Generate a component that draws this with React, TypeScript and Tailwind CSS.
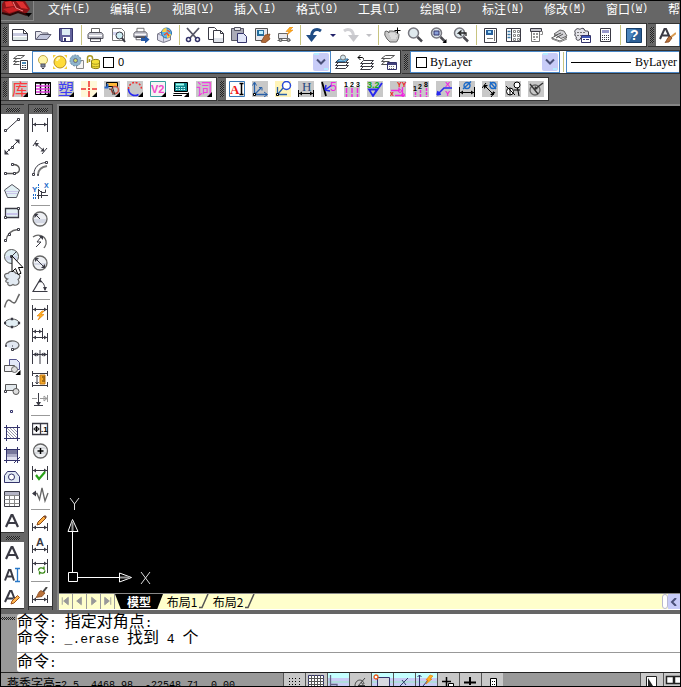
import type { ReactNode } from 'react'

const INK = '#3a3a44'
const NAVY = '#33336b'

const MENUS = [
  ['文件', 'F'],
  ['编辑', 'E'],
  ['视图', 'V'],
  ['插入', 'I'],
  ['格式', 'O'],
  ['工具', 'T'],
  ['绘图', 'D'],
  ['标注', 'N'],
  ['修改', 'M'],
  ['窗口', 'W'],
  ['帮助', 'H'],
]

// '|' is a separator, a trailing '>' marks the narrow drop-down arrows
const STANDARD = [
  'new', 'open', 'save', '|', 'print', 'preview', 'publish', 'dwf', '|',
  'cut', 'copy', 'paste', 'match', 'block', '|', 'undo', 'undo>', 'redo', 'redo>', '|',
  'pan', 'zoom', 'zoomWindow', 'zoomPrev', '|',
  'props', 'center', 'palettes', 'sheets', 'markup', 'calc', '|', 'help',
]

const YANXIU = ['ku', 'table', 'su', 'cross', 'part', 'circleDash', 'v2', 'machine', 'ci']

const YANXIU_DIM = [
  'ai', 'axis', 'axisCircle', 'dimH', 'lead5', 'ord123', 'rough', 'xxyy', 'ord1238', 'xy',
  'diaDim', 'diaAlign', 'diaTwo', 'diaOne',
]

const DRAW = [
  'line', 'xline', 'pline', 'polygon', 'rect', 'arc', 'circle', 'revcloud', 'spline', 'ellipse',
  'ellipseArc', 'insert', 'makeBlock', 'point', 'hatch', 'gradient', 'region', 'grid', 'text',
]

const TEXT_TOOLS = ['text', 'textLine', 'textEdit']

const DIMENSION = [
  'dLinear', 'dAligned', 'dArc', 'dOrdinate', '|', 'dRadius', 'dJogged', 'dDiameter', 'dAngular', '|',
  'dQuick', 'dBaseline', 'dContinue', 'dSpace', 'dBreak', '|', 'dTolerance', 'dCenter', 'dInspect',
  'dJogLine', '|', 'dEdit', 'dTextEdit', 'dUpdate', '|', 'dStyle',
]

const BACK = <path d="M0 0h16v16H0z" fill="#c8c8c8" stroke="none" />
const CORNER = <path d="M16 11v5h-5z" fill="#000" stroke="none" />

const printer = (
  <>
    <path d="M4.500 6V1.500h8V6" fill="#fff" stroke="#666" />
    <path d="M2.500 5.500h12l1.500 2v4h-15v-4z" fill="#c9c9d2" stroke="#55555f" />
    <path d="M2 8.500h13" stroke="#fff" />
    <path d="M3.500 11.500h10v3h-10z" fill="#fff" stroke="#55555f" />
    <path d="M3 11.500h11" strokeWidth="1.500" />
  </>
)

// dimension line at height y between extension lines that run from a to b
const dim = (y: number, a: number, b: number) => (
  <>
    <path d={`M.5 ${a}V${b}M15.500 ${a}V${b}M1 ${y + 0.5}h14`} />
    <path d={`M1 ${y + 0.5}l3-2v4zM15 ${y + 0.5}l-3-2v4z`} fill={INK} stroke="none" />
  </>
)

const bigA = <path d="M2 14 7.500 2h1L14 14M4.500 10h7" strokeWidth="2.200" />

const smallA = (
  <text x="4" y="9" fontSize="11" fontWeight="bold" fill={INK} stroke="none" fontFamily="Liberation Sans, sans-serif">A</text>
)

const bolt = <path d="M10 6 5 11h3l-2 4 6-5.500H9L12 6z" fill="#ffb020" stroke="#e07800" strokeWidth=".6" />

const pencil = (
  <>
    <path d="m6 7 6-6 2 2-6 6-3 1z" fill="#ffae42" stroke="#8a4a18" />
    <path d="m11.500 1.500 1.500-1.500 2 2-1.500 1.500z" fill="#7a4a30" stroke="none" />
  </>
)

const brush = (
  <>
    <path d="m11 5 4-5" stroke="#444" strokeWidth="2" />
    <path d="M9 3.500 13 6l-3 3.500-6 1c2-2 2-6 5-7z" fill="#b8713a" stroke="#7a3c14" strokeWidth=".7" />
  </>
)

const lens = (
  <>
    <circle cx="6.500" cy="6" r="5" fill="#dfe9ee" stroke="#77777f" strokeWidth="1.500" />
    <path d="m10.500 10 4.500 4.500" stroke="#4a4a50" strokeWidth="2.500" />
  </>
)

const layers = (
  <>
    <path d="M4.500 11.500h10l-3 3H1.500z" fill="#fff" />
    <path d="M4.500 8.500h10l-3 3H1.500z" fill="#fff" />
    <path d="M4.500 5.500h10l-3 3H1.500z" fill="#fff" />
  </>
)

const cjk = 'Noto Sans CJK SC, sans-serif'
const sans = 'Liberation Sans, sans-serif'

const ICONS: Record<string, ReactNode> = {
  new: (
    <>
      <path d="M.5 2.500h11l4 4v7H.5z" fill="#fff" />
      <path d="M1 6h14v3H1z" fill="#c9cbe0" stroke="none" />
      <path d="M1 10h14v3H1z" fill="#dde6e6" stroke="none" />
      <path d="M11.500 2.500v4h4" />
    </>
  ),
  open: (
    <>
      <path d="M.5 12.500v-8h5l2 1.500h5.500v2" fill="#e6e6ee" stroke="#5c5c70" />
      <path d="m1 12.500 4-5h11l-4 5z" fill="#c2c6dc" stroke="#5c5c70" />
    </>
  ),
  save: (
    <>
      <path d="M1.500 1.500h13v13H3l-1.500-1.500z" fill="#62629c" stroke={NAVY} />
      <path d="M4 2h8v6H4z" fill="#dcecf4" stroke="none" />
      <path d="M5 10h7v4H5z" fill="#fff" stroke="none" />
      <path d="M6 11h2v3H6z" fill={NAVY} stroke="none" />
    </>
  ),
  print: printer,
  preview: (
    <>
      <path d="M2.500 13.500v-12h9l3 3v9z" fill="#fff" stroke="#777" />
      <path d="M3 5h8v3H3z" fill="#d6d6f0" stroke="none" />
      <circle cx="9.500" cy="8.500" r="3.500" fill="#cfeef4" />
      <path d="m12 11 3 4" strokeWidth="2" />
    </>
  ),
  publish: (
    <>
      <g transform="scale(.88)">{printer}</g>
      <path d="M8 11h4V8.500l4.500 4-4.500 4V14H8z" fill="#2458a8" stroke="none" />
    </>
  ),
  dwf: (
    <>
      <path d="m1.500 7 6-3 7 3v6l-7 2.500-6-2.500z" fill="#dcdcea" stroke="#777788" />
      <path d="M7.500 9v6M1.500 7l6 2" stroke="#9999aa" />
      <circle cx="10.500" cy="6" r="5" fill="#5bb8e8" stroke="#2b6ca8" />
      <path d="M10.500 1v4L6 5c1-3 2-4 4.500-4zM11 7h4c0 2-2 4-4 4z" fill="#ffd23c" stroke="none" />
      <path d="m8 8 3-2 2 3M11 3l3 2" stroke="#e8503a" strokeWidth="1.500" />
    </>
  ),
  cut: (
    <>
      <path d="m2 1 9.500 10.500M14 1 4.500 11.500" strokeWidth="1.800" stroke="#555566" />
      <circle cx="3.500" cy="12.500" r="2" stroke={NAVY} strokeWidth="1.500" />
      <circle cx="12.500" cy="12.500" r="2" stroke={NAVY} strokeWidth="1.500" />
    </>
  ),
  copy: (
    <>
      <path d="M.5.500h6l2 2v10h-8z" fill="#fff" />
      <path d="M5.500 3.500h7l3 3v9h-10z" fill="#fff" />
      <path d="M6 11h9v4H6z" fill="#dfe3ea" stroke="none" />
      <path d="M12.500 3.500v3h3" />
    </>
  ),
  paste: (
    <>
      <path d="M.5 1.500h12v12H.5z" fill="#aaaab6" stroke="#555562" />
      <path d="M3.500.5h6v3h-6z" fill="#e8e8ee" stroke="#555562" />
      <path d="M6.500 6.500h6l3 3v6h-9z" fill="#e2e6f8" stroke={NAVY} />
    </>
  ),
  match: (
    <>
      <path d="M1.500 1.500h12v12h-12z" fill="#e6e6ec" stroke="#555" />
      <path d="M3 3h7v6H3z" fill="#246c9c" stroke="none" />
      <path d="M5 4h4v3H5z" fill="#bff0ff" stroke="none" />
      <path d="m11 8 5-1-1 3 1 2-5 4-4-1z" fill="#b06a38" stroke="#7a3c14" strokeWidth=".7" />
    </>
  ),
  block: (
    <>
      <path d="M1.500 6.500h9v5h-9zM.5 13.500h13" fill="#e8e8ec" stroke="#666" />
      <circle cx="3.500" cy="13" r="1.500" fill="#aaa" stroke="#555" />
      <circle cx="11.500" cy="13" r="1.500" fill="#aaa" stroke="#555" />
      <path d="m13 0-4 4.500h3L10 8l6-5h-3l3-3z" fill="#ffb020" stroke="#e07800" strokeWidth=".5" />
    </>
  ),
  undo: (
    <>
      <path d="M15 4c-4-3-9-1.500-9.500 5" stroke="#1f4c84" strokeWidth="3" />
      <path d="M0 8h11l-5.500 7z" fill="#1f4c84" stroke="none" />
    </>
  ),
  redo: (
    <>
      <path d="M2 4c4-3 9-1.500 9.500 5" stroke="#d0d0d4" strokeWidth="3" />
      <path d="M6 8h11l-5.500 7z" fill="#c8c8cc" stroke="none" />
    </>
  ),
  pan: (
    <>
      <path d="M1 4.500 3 4l2 2V4h3l3 .5 2 1 2 2-.5 4-2 3.500H6L3 12 .8 8z" fill="#c8c8c8" stroke="#666" />
      <path d="M5 7h6M6 9h7M7 11h5" stroke="#eee" />
      <path d="M13.500.5v6M10.500 3.500h6" stroke="#000" />
    </>
  ),
  zoom: lens,
  zoomWindow: (
    <>
      {lens}
      <path d="M4 4h5v4H4z" fill="#8aa0d8" stroke={NAVY} />
      <path d="M16.500 12v4h-4z" fill="#000" stroke="none" />
    </>
  ),
  zoomPrev: (
    <>
      {lens}
      <path d="m8.500 3.500-3 2.500H13v3M8.500 8.500 5.500 6" stroke="#222" strokeWidth="1.300" />
    </>
  ),
  props: (
    <>
      <path d="M2.500 1.500h12v14h-12z" fill="#fff" />
      <path d="M4 3h7v5H4z" fill="#28609c" stroke="none" />
      <path d="M6 4h3v2H6z" fill="#9fd8f8" stroke="none" />
      <path d="M5 11.500h6M12.500 3v11" stroke="#777" />
    </>
  ),
  center: (
    <>
      <path d="M1.500 1.500h14v13h-14z" fill="#fff" />
      <path d="M6.500 2v12" />
      <path d="M2.500 4.500h3M2.500 7.500h3M2.500 10.500h3" stroke="#3878a8" strokeWidth="1.500" />
      <path d="M8.500 3.500h2v2h-2zM12.500 3.500h2v2h-2zM8.500 7.500h2v2h-2zM12.500 7.500h2v2h-2zM8.500 11.500h2v2h-2zM12.500 11.500h2v2h-2z" stroke="#888" />
    </>
  ),
  palettes: (
    <>
      <path d="M3.500 1.500h8v13h-8z" fill="#fff" stroke="#777" />
      <path d="M2.500 1.500h11v3h-11z" fill="#c4c4cc" />
      <path d="M5.500 6.500h1v1h-1zM8.500 6.500h1v1h-1zM5.500 9.500h1v1h-1zM8.500 9.500h1v1h-1zM5.500 12.500h2" stroke="#777" />
      <path d="M12.500 4.500h2v3h-2" stroke="#888" />
    </>
  ),
  sheets: (
    <>
      <path d="m.5 11 7-3.500 8.500 3-7 3.500z" fill="#fff" stroke="#666" />
      <path d="M3 7 9 3l4 1 3 5-6 2.500z" fill="#d4d4d8" stroke="#666" />
      <path d="m3 9 7-3M5 11l7-4" stroke="#555" />
      <path d="m1 12 8 3 7-3" stroke="#888" />
    </>
  ),
  markup: (
    <>
      <path d="M1.500 3c2-3 4 0 5-1s4-1 4 1 4 0 4 2v5h-7l-2 3c-3 1-4-1-3-3-2-1-2-3-1-4-1-1-1-2 0-3z" fill="#e4e4ea" />
      <path d="M3 5.500h9M3 8.500h6" stroke="#777" strokeDasharray="2 1" />
      <path d="M7.500 8.500h9v7h-9z" fill="#fff" stroke={NAVY} />
      <path d="M8 10h8" stroke="#3f57b8" strokeWidth="2" />
      <path d="M9 12.500h2m1 0h3" stroke={NAVY} />
    </>
  ),
  calc: (
    <>
      <path d="M3.500 1.500h10v13h-10z" fill="#fff" />
      <path d="M5 3h7v3H5z" fill="#9898c8" stroke="none" />
      <path d="M5 8.500h7M5 10.500h7M5 12.500h7" strokeDasharray="1 1" />
    </>
  ),
  help: (
    <>
      <path d="M.5 1.500h15v14H.5z" fill="#2c5f96" stroke="#163e6a" />
      <path d="M1 2h9L3 15H1z" fill="#4a84bc" stroke="none" />
      <text x="4" y="13" fontSize="14" fontWeight="bold" fill="#fff" stroke="none" fontFamily={sans}>?</text>
    </>
  ),
  textStyle: (
    <>
      <path d="M1 12 5.500 2H7l4.500 10M3 8.500h7" strokeWidth="2" />
      <path d="m12 10 5-4" stroke="#d89a50" strokeWidth="2" />
      <path d="m11 9 2 2-3 4-4 .5c2-2 2-5 5-6.500z" fill="#b8713a" stroke="#7a3c14" strokeWidth=".7" />
    </>
  ),
  layerProps: (
    <>
      <path d="M5.500 1.500h7l-4 3h-7zM1.500 7.500 5 4.500M1.500 7.500h6M1.500 10.500 5 7.500M1.500 10.500h6" fill="#fff" stroke="#555" />
      <path d="M8.500 6.500h7v9h-7z" fill="#fff" />
      <path d="M10 8h4v2h-4z" fill="#4a8ab8" stroke="none" />
      <path d="M10 11.500h4M10 13.500h4" strokeDasharray="1 .5" />
    </>
  ),
  layerCurrent: (
    <>
      {layers}
      <path d="M3 7.500 6 5h8l-3 2.500z" fill="#7ac0e8" stroke="#3878a8" />
      <circle cx="9" cy="3.500" r="2.500" fill="#d0e4ec" stroke="#777" />
    </>
  ),
  layerPrev: (
    <>
      <g transform="translate(2 1)">{layers}</g>
      <path d="M1 3.500h4c1 0 1.500.5 1.500 2M3.500 1 1 3.500 3.500 6" stroke="#000" />
    </>
  ),
  layerState: (
    <>
      <path d="M5.500 1.500h9l-4 3h-9zM1.500 7.500 5 4.500M1.500 7.500h8M1.500 10.500 5 7.500M1.500 10.500h6" fill="#fff" stroke="#555" />
      <path d="M7.500 8.500h9v7h-9z" fill="#fff" stroke={NAVY} />
      <path d="M8 10h8" stroke="#44447c" strokeWidth="2" />
      <path d="M9 12.500h6M9 14.500h6" stroke="#777" strokeDasharray="1 1" />
    </>
  ),
  bulb: (
    <>
      <circle cx="8" cy="6" r="4.500" fill="#fff6a8" stroke="#c0a848" />
      <path d="M6 10h4v3H6z" fill="#7c8898" stroke="#556" />
      <path d="M7 14.500h2" />
    </>
  ),
  sun: (
    <>
      <path d="M1 1h3L1 4zM15 1v3l-3-3zM1 15v-3l3 3zM15 15h-3l3-3z" fill="#f4d03c" stroke="none" />
      <circle cx="8" cy="8" r="6" fill="#ffdc38" stroke="#b89020" />
      <path d="M5 7c0-2 1-3 3-3" stroke="#fff6b0" strokeWidth="2" />
    </>
  ),
  freeze: (
    <>
      <path d="M7.500 6.500h7v8h-7z" fill="#f4f4f4" stroke="#888" />
      <circle cx="6.500" cy="6.500" r="5.500" fill="#8cb4cc" stroke="#6a88a0" strokeDasharray="2 1" />
      <circle cx="6.500" cy="6.500" r="2" fill="#c8d864" stroke="#668" />
    </>
  ),
  lock: (
    <>
      <path d="M1.500 9V4c0-3 5-3 5 0v1.500M3.500 8V5" stroke="#a89820" strokeWidth="1.500" />
      <path d="M5.500 6.500c2-1.500 7-1.500 8 0v7c-1 1.500-6 1.500-8 0z" fill="#f4e038" stroke="#8a7c18" />
      <path d="M6 9.500c2 1 5 1 7 0M6 12c2 1 5 1 7 0" stroke="#a89820" />
    </>
  ),
  ku: (
    <>
      {BACK}
      <text x="0" y="14" fontSize="16" fill="#ff3838" stroke="none" fontFamily={cjk}>库</text>
      {CORNER}
    </>
  ),
  table: (
    <>
      <path d="M.5 1.500h15v12H.5z" fill="#fff" stroke="#000" />
      <path d="M0 2h16M5.500 2v12M10.500 2v12M13.500 2v12" stroke="#000" strokeWidth="1.400" />
      <path d="M1 5h14M1 8h14M1 11h14" stroke="#d838d8" strokeWidth="1.300" />
      {CORNER}
    </>
  ),
  su: (
    <>
      {BACK}
      <text x="0" y="14" fontSize="16" fill="#3c3cf4" stroke="none" fontFamily={cjk}>塑</text>
      {CORNER}
    </>
  ),
  cross: (
    <>
      <path d="M0 0h16v16H0z" fill="#fff8d8" stroke="none" />
      <path d="M8 0v6M8 10v6M0 8h5M11 8h5M8 7v2M7 8h2" stroke="#f03030" strokeWidth="1.500" />
      {CORNER}
    </>
  ),
  part: (
    <>
      {BACK}
      <path d="M2.500 1.500h11v4h-11z" fill="#ffb838" stroke="#000" />
      <path d="M.5 6.500h3v-4" stroke="#2868c8" strokeWidth="2" />
      <circle cx="11" cy="9" r="3.500" stroke="#d05848" strokeWidth="1.500" />
      <path d="M5 8c3 0 4 2 4 6M8 5l3 9" stroke="#333" />
      {CORNER}
    </>
  ),
  circleDash: (
    <>
      {BACK}
      <path d="M1.500 8a6.500 6.500 0 0 1 13 0" stroke="#f03030" strokeWidth="1.500" strokeDasharray="2 1.500" />
      <path d="M1.500 8a6.500 6.500 0 0 0 10 5.500" stroke="#2828f0" strokeWidth="1.500" />
      {CORNER}
    </>
  ),
  v2: (
    <>
      <path d="M.5.5h15v15H.5z" fill="#f4f4f4" stroke="#38a0a0" />
      <text x="1" y="12" fontSize="11" fontWeight="bold" fill="#f048c8" stroke="none" fontFamily={sans}>V2</text>
      {CORNER}
    </>
  ),
  machine: (
    <>
      <path d="M1.500 1.500h13v9h-13z" fill="#108890" stroke="#000" />
      <path d="M3 3.500h8" stroke="#a0fff0" strokeWidth="2" />
      <path d="M3 6.500h9M3 8.500h9" stroke="#c8ffff" strokeDasharray="1.500 1" />
      <path d="M.5 12.500h15M0 14.500h9" stroke="#000" />
      {CORNER}
    </>
  ),
  ci: (
    <>
      {BACK}
      <text x="0" y="14" fontSize="16" fill="#f040e0" stroke="none" fontFamily={cjk}>词</text>
      {CORNER}
    </>
  ),
  ai: (
    <>
      <path d="M.5.500h15v15H.5z" fill="#fff" stroke="#3878b8" />
      <text x="1" y="13" fontSize="13" fontWeight="bold" fill="#f01818" stroke="none" fontFamily="Liberation Serif, serif">A</text>
      <path d="M12.500 3v10M10.500 2.500h4M10.500 13.500h4" stroke="#000" strokeWidth="1.500" />
    </>
  ),
  axis: (
    <>
      {BACK}
      <path d="M2.500 14V2M2.500 13.500H15M3 13l6-6" stroke="#2860a8" strokeWidth="1.300" />
      <path d="M.5 4.500 2.500 1l2 3.500M12 11l3.500 2.500L12 16M7 6.500h3v3" stroke="#2860a8" />
      <path d="M1.500 12.500h2v2h-2z" fill="#fff" stroke="#000" />
    </>
  ),
  axisCircle: (
    <>
      <path d="M0 0h16v16H0z" fill="#fff4b8" stroke="none" />
      <circle cx="11.500" cy="4.500" r="4" fill="#fff" stroke="#2848d8" strokeWidth="1.500" />
      <path d="M2.500 14V6M2.500 13.500H12M3 13l5-6" stroke="#2860a8" strokeWidth="1.300" />
      <path d="M1.500 12.500h2v2h-2z" fill="#fff" stroke="#000" />
    </>
  ),
  dimH: (
    <>
      {BACK}
      <text x="4" y="10" fontSize="13" fill="#284880" stroke="none" fontFamily="Liberation Serif, serif">H</text>
      <path d="M.5 9v7M15.500 9v7M1 12.500h14" stroke="#000" />
      <path d="m1 12.500 3-2v4zM15 12.500l-3-2v4z" fill="#000" stroke="none" />
    </>
  ),
  lead5: (
    <>
      {BACK}
      <path d="m1 1 4 14" stroke="#000" strokeWidth="1.800" />
      <path d="m4 9 7-5M4 9l1-5M4 9l5 1" stroke="#2828f0" strokeWidth="1.500" />
      <text x="9" y="10" fontSize="12" fill="#f028e0" stroke="none" fontFamily={sans}>5</text>
    </>
  ),
  ord123: (
    <>
      {BACK}
      <path d="M0 0h16v6H0z" fill="#fff" stroke="none" />
      <text x="0" y="6" fontSize="7" fontWeight="bold" fill="#000" stroke="none" fontFamily={sans}>1</text>
      <text x="6" y="6" fontSize="7" fontWeight="bold" fill="#000" stroke="none" fontFamily={sans}>2</text>
      <text x="12" y="6" fontSize="7" fontWeight="bold" fill="#000" stroke="none" fontFamily={sans}>3</text>
      <path d="M2.500 7v9M8 7v9M13.500 7v9" stroke="#f028e0" strokeWidth="1.500" strokeDasharray="5 1" />
    </>
  ),
  rough: (
    <>
      {BACK}
      <path d="M2 8.500h8l-4 6.500zM6 15l9-13" stroke="#2828f0" strokeWidth="1.800" />
      <text x="0" y="7" fontSize="9" fontWeight="bold" fill="#10a820" stroke="none" fontFamily={sans}>3.2</text>
    </>
  ),
  xxyy: (
    <>
      {BACK}
      <path d="M1 9.500h8v-3M12.500 6v9M5 14.500h9" stroke="#f028e0" strokeWidth="1.300" />
      <circle cx="10" cy="10" r="1.500" stroke="#f028e0" />
      <circle cx="13" cy="14" r="1.500" stroke="#f028e0" />
      <text x="7" y="6" fontSize="7" fontWeight="bold" fill="#f01818" stroke="none" fontFamily={sans}>YY</text>
      <text x="0" y="15" fontSize="7" fontWeight="bold" fill="#f01818" stroke="none" fontFamily={sans}>x</text>
    </>
  ),
  ord1238: (
    <>
      {BACK}
      <text x="0" y="10" fontSize="7" fontWeight="bold" fill="#000" stroke="none" fontFamily={sans}>1</text>
      <text x="5" y="8" fontSize="7" fontWeight="bold" fill="#000" stroke="none" fontFamily={sans}>2</text>
      <text x="11" y="6" fontSize="7" fontWeight="bold" fill="#000" stroke="none" fontFamily={sans}>8</text>
      <path d="M2.500 11v5M7.500 9v7M13.500 7v9" stroke="#f028e0" strokeWidth="1.500" strokeDasharray="3 1" />
    </>
  ),
  xy: (
    <>
      {BACK}
      <path d="m1 14 7-7h8M1 14l1-4M1 14l4-1" stroke="#2828f0" strokeWidth="1.500" />
      <text x="9" y="6" fontSize="8" fontWeight="bold" fill="#f028e0" stroke="none" fontFamily={sans}>X</text>
      <text x="9" y="15" fontSize="8" fontWeight="bold" fill="#f028e0" stroke="none" fontFamily={sans}>Y</text>
    </>
  ),
  diaDim: (
    <>
      {BACK}
      <circle cx="8" cy="4.500" r="3" stroke="#1868c8" strokeWidth="1.300" />
      <path d="m4 8 8-7.500" stroke="#1868c8" strokeWidth="1.300" />
      <path d="M.5 6v10M15.500 6v10M1 11.500h14" stroke="#000" />
      <path d="m1 11.500 3-2v4zM15 11.500l-3-2v4z" fill="#000" stroke="none" />
    </>
  ),
  diaAlign: (
    <>
      {BACK}
      <circle cx="11" cy="4.500" r="3" stroke="#1868c8" strokeWidth="1.300" />
      <path d="m8 1 6 7" stroke="#1868c8" strokeWidth="1.300" />
      <path d="m3 5 8 8M0 7l4-5M9 16l4-5" stroke="#000" />
      <path d="M2 4h4L2 8zM12 14H8l4-4z" fill="#000" stroke="none" />
    </>
  ),
  diaTwo: (
    <>
      {BACK}
      <circle cx="12" cy="4" r="3" fill="#fff" stroke="#000" />
      <circle cx="5" cy="10.500" r="3.500" fill="#fff" stroke="#000" />
      <path d="m1 5 9 9M5 7v7M12.500 7l1.500 8M9 9h6" stroke="#000" />
    </>
  ),
  diaOne: (
    <>
      {BACK}
      <circle cx="7" cy="9" r="5" stroke="#666" strokeWidth="1.300" />
      <path d="m2 3 8 10M7 8l8-6" stroke="#333" strokeWidth="1.300" />
      <path d="m6 9 1-4 3 3z" fill="#333" stroke="none" />
    </>
  ),
  line: (
    <>
      <path d="M2 13.500 14 2.500" />
      <path d="M.5 12.500h2v2h-2zM13.500 1.500h2v2h-2z" fill="#fff" />
    </>
  ),
  xline: (
    <>
      <path d="M2 14 14 2" />
      <path d="M.5 15.500v-5l4.500 5zM15.500.5h-5l5 4.500z" fill={INK} stroke="none" />
      <path d="M7.500 7.500h2v2h-2zM4.500 10.500h1v1h-1z" fill="#fff" />
    </>
  ),
  pline: (
    <>
      <path d="M2 12.500h9c6-1 6-8-1-9" strokeWidth="1.300" stroke="#555" />
      <path d="M.5 11.500h2v2h-2zM9.500 11.500h2v2h-2zM7.500 2.500h2v2h-2z" fill="#fff" />
    </>
  ),
  polygon: (
    <>
      <path d="m8 1.500 7.500 5.500-3 7.500h-9L.5 7z" fill="#e2f0f4" stroke="#55555f" />
      <path d="M2 8.500h12M3 10.500h10" stroke="#ccc8ec" />
    </>
  ),
  rect: (
    <>
      <path d="M1.500 3.500h13v9h-13z" fill="#e4f0f4" strokeWidth="1.300" />
      <path d="M2 8h12v2H2z" fill="#c8c4ea" stroke="none" />
      <path d="M.5 11.500h2v2h-2zM13.500 2.500h2v2h-2z" fill="#fff" />
    </>
  ),
  arc: (
    <>
      <path d="M2 14C3 7 7 3 14 2.500" stroke="#666" strokeWidth="1.300" />
      <path d="M.5 12.500h2v2h-2zM4.500 6.500h2v2h-2zM13.500 1.500h2v2h-2z" fill="#fff" />
    </>
  ),
  circle: (
    <>
      <circle cx="7.500" cy="7.500" r="7" fill="#dcecf2" stroke="#555" />
      <path d="M2 8h11M2 10h11" stroke="#c8c4ea" />
      <path d="m7.500 7.500 5-5M6.500 6.500h2v2h-2z" />
    </>
  ),
  revcloud: (
    <path d="M3.500 8C-.5 7-.5 2 4 2.500 6-.5 10-.5 12 2.500c4-.5 5 4 2 6 3 4-2 7-5 5-3 2-6 1-5-2-3 0-3-2-.5-3.500z" fill="#e2eaf2" stroke="#666" strokeWidth="1.200" />
  ),
  spline: <path d="M.5 14.500C3 5 5 6 8 9c4 3 4-2 7.500-8" strokeWidth="1.500" stroke="#666" />,
  ellipse: (
    <>
      <ellipse cx="8" cy="8" rx="7" ry="4" fill="#e2eef4" stroke="#555" />
      <path d="M7.500 3.500h1v1h-1zM7.500 11.500h1v1h-1zM.5 7.500h1v1h-1zM14.500 7.500h1v1h-1z" strokeWidth="1.300" />
    </>
  ),
  ellipseArc: (
    <>
      <path d="M2 9c-2-6 12-7 13-1 0 3-3 4-6 4.500" fill="#e2e8f2" stroke="#666" strokeWidth="1.300" />
      <path d="M1.500 8.500h1v1h-1zM7.500 11.500h2v2h-2zM8.500 8.500v1" />
    </>
  ),
  insert: (
    <>
      <path d="M5.500 9.500v-9h7l3 3v7h-4" fill="#e2e8f8" stroke="#55558c" />
      <path d="M.5 6.500h10v6H.5z" fill="#f0f0f4" stroke="#555" />
      <circle cx="10.500" cy="10.500" r="3" fill="#ddd" stroke="#666" />
      <path d="M16.500 11v5h-5z" fill="#000" stroke="none" />
    </>
  ),
  makeBlock: (
    <>
      <path d="M1.500 3.500h11v6h-11z" fill="#e2e8ec" stroke="#555" />
      <circle cx="12" cy="10.500" r="3" fill="#ddd" stroke="#555" />
      <path d="M.5 9.500h2v2h-2z" fill="#fff" />
    </>
  ),
  point: <path d="M6.500 7.500h2v2h-2z" stroke={NAVY} />,
  hatch: (
    <>
      <path d="m3 9 4 4M3 6l7 7M3 3l10 10M6 3l7 7M9 3l4 4" stroke="#99a" />
      <path d="M0 2.500h16M0 13.500h16M2.500 0v16M13.500 0v16" stroke={NAVY} />
    </>
  ),
  gradient: (
    <>
      <path d="M3 3h10v4H3z" fill="#77779c" stroke="none" />
      <path d="M3 7h10v3H3z" fill="#acacc8" stroke="none" />
      <path d="M3 10h10v3H3z" fill="#e0e0f0" stroke="none" />
      <path d="M0 2.500h16M0 13.500h16M2.500 0v16M13.500 0v16M10 16l6-6" stroke={NAVY} />
    </>
  ),
  region: (
    <>
      <path d="M.5 13.500v-7l3-4h8l4 5v6z" fill="#e2eaf4" stroke={NAVY} />
      <circle cx="7.500" cy="8" r="3" fill="#fff" stroke={NAVY} />
    </>
  ),
  grid: (
    <>
      <path d="M.5.500h15v15H.5z" fill="#fff" />
      <path d="M1 2.500h14" stroke="#b4b4c4" strokeWidth="3" />
      <path d="M.5 4.500h15M.5 8.500h15M.5 12.500h15M5.500 5v10M10.500 5v10" stroke="#888" />
    </>
  ),
  text: bigA,
  textLine: (
    <>
      <path d="M1 13.500 5 3h1.500L10 13.500M3 9.500h6" strokeWidth="2" />
      <path d="M13.500 2v12M11 1.500h5M11 14.500h5" stroke="#2878c8" strokeWidth="1.300" />
    </>
  ),
  textEdit: (
    <>
      <path d="M1 13 6 2h1.500L11 11M3 9.500h6" strokeWidth="2" />
      <path d="m8 12 5.500-5.500 2 2L10 14l-3 1z" fill="#ffb850" stroke="#a05018" />
    </>
  ),
  dLinear: dim(7, 1, 15),
  dAligned: (
    <>
      <path d="m3 4 9 8M1 7l4-6M10 15l5-6" />
      <path d="M3 4h4L4 8zM12.500 12.500h-4l3-4z" fill={INK} stroke="none" />
    </>
  ),
  dArc: (
    <>
      <path d="M2 13C2 7 6 2 14 1.500" />
      <path d="M6 14c0-5 3-8 9-9" stroke="#777" strokeWidth="1.800" />
      <path d="M.5 12.500h2v2h-2zM13.500.5h2v2h-2zM5.500 13.500h1v1h-1z" fill="#fff" />
    </>
  ),
  dOrdinate: (
    <>
      <path d="M6.500 6v10M5 12.500h11M9.500 8v7M6.500 6.500l3 3h4v-3" />
      <text x="0" y="9" fontSize="8" fontWeight="bold" fill="#1868c8" stroke="none" fontFamily={sans}>Y</text>
      <text x="12" y="5" fontSize="7" fontWeight="bold" fill="#1868c8" stroke="none" fontFamily={sans}>X</text>
      <path d="M6.500 1v4M1.500 11v5M3.500 11v5" stroke="#1868c8" strokeDasharray="2 1" />
    </>
  ),
  dRadius: (
    <>
      <circle cx="8" cy="8" r="7" fill="#eef0f4" stroke="#666" strokeWidth="1.300" />
      <path d="M2 9h12M3 11h10" stroke="#d4d8e4" strokeWidth="2" />
      <path d="m8 8-4-4" />
      <path d="M2.500 3h4l-4 4z" fill={INK} stroke="none" />
    </>
  ),
  dJogged: (
    <>
      <path d="M1 4c5-4 12-1 13 4s-1 5-2 7" stroke="#666" strokeWidth="1.300" />
      <path d="M4 14 9 9H5l4-5" />
      <path d="M7 3h4v4z" fill={INK} stroke="none" />
    </>
  ),
  dDiameter: (
    <>
      <circle cx="8" cy="8" r="7" fill="#eef0f4" stroke="#666" strokeWidth="1.300" />
      <path d="M2 9h12" stroke="#d4d8e4" strokeWidth="2" />
      <path d="m4 4 8 8" />
      <path d="M3 3h4L3 7zM13 13H9l4-4z" fill={INK} stroke="none" />
    </>
  ),
  dAngular: (
    <>
      <path d="M15.500 14.500H1L9 1" strokeWidth="1.200" />
      <path d="M8 4c3 1 5 4 5 9" />
      <path d="M6.500 5.500 8 2l2.500 3zM11 10h4l-2 4z" fill={INK} stroke="none" />
    </>
  ),
  dQuick: <>{dim(4, 0, 15)}{bolt}</>,
  dBaseline: (
    <>
      <path d="M.5 1v14M10.500 1v11M15.500 6v9M1 4.500h9M1 10.500h14" />
      <path d="m1 4.500 3-2v4zM10 4.500l-3-2v4zM1 10.500l3-2v4zM15 10.500l-3-2v4z" fill={INK} stroke="none" />
    </>
  ),
  dContinue: (
    <>
      <path d="M.5 1v14M8 1v14M15.500 1v14M1 5.500h14" />
      <path d="m1 5.500 3-2v4zM7.500 5.500l-3-2v4zM8.500 5.500l3-2v4zM15 5.500l-3-2v4z" fill={INK} stroke="none" />
    </>
  ),
  dSpace: (
    <>
      <path d="M0 2.500h16M0 14.500h16M.5 0v5M15.500 0v5M.5 11v5M15.500 11v5M5 4v9M3.500 6 5 4l1.500 2M3.500 11 5 13l1.500-2" />
      <path d="M8 4h5v9H8z" fill="#f4a828" stroke="#c47810" />
      <path d="M10 6h3M11 8h2M10 10h3" stroke="#5a3808" />
    </>
  ),
  dBreak: (
    <>
      <path d="M0 5.500h5M8 5.500h8M15.500 2v7M12 3v5l3-2.500z" stroke="#999" />
      <path d="M6.500 0v13M2 12.500h9" />
      <path d="M4 9h5l-2.500 4z" fill={INK} stroke="none" />
    </>
  ),
  dTolerance: (
    <>
      <path d="M.5 2.500h15v11H.5zM8.500 2.500v11" fill="#fff" strokeWidth="1.300" />
      <circle cx="4.500" cy="8" r="2" />
      <path d="M4.500 5v6M1.500 8h6" stroke="#000" />
      <text x="9" y="11" fontSize="8" fontWeight="bold" fill="#000" stroke="none" fontFamily={sans}>.1</text>
    </>
  ),
  dCenter: (
    <>
      <circle cx="8.500" cy="8" r="7" fill="#eef0f2" stroke="#666" strokeWidth="1.300" />
      <path d="M3 5h11M3 10h11" stroke="#d8dade" strokeWidth="2" />
      <path d="M8.500 5v6M5.500 8h6" stroke="#000" strokeWidth="1.500" />
    </>
  ),
  dInspect: (
    <>
      {dim(5, 1, 15)}
      <path d="m4 10 3 4 6-7" stroke="#28a018" strokeWidth="2.200" />
    </>
  ),
  dJogLine: (
    <>
      <path d="M1 6.500h4l2.500 6L10 1l3 13 3-8" strokeWidth="1.300" stroke="#666" />
      <path d="m0 6.500 4-3v6z" fill={INK} stroke="none" />
    </>
  ),
  dEdit: <>{dim(12, 8, 16)}{pencil}</>,
  dTextEdit: <>{dim(12, 8, 16)}{smallA}</>,
  dUpdate: (
    <>
      {dim(4, 0, 14)}
      <path d="M6.500 11.500c0-3 3.500-3.500 5.500-1.500V7.500M13 11.500c0 3-3.500 3.500-5.500 1.500v2.500" stroke="#3a8a18" strokeWidth="1.300" />
    </>
  ),
  dStyle: <>{dim(12, 8, 16)}{brush}</>,
}

const STATUS: { name: string; on: boolean; art: ReactNode }[] = [
  { name: '捕捉', on: false, art: <path d="M5 5.500h8M5 8.500h8M5 11.500h8M15.500 5v8" stroke="#000" strokeDasharray="1 2" /> },
  {
    name: '栅格',
    on: false,
    art: (
      <>
        <path d="M2.500 2.500h15v12h-15z" fill="#fff" stroke={NAVY} />
        <path d="M2 5.500h16M2 8.500h16M2 11.500h16M5.500 2v12M8.500 2v12M11.500 2v12M14.500 2v12" stroke="#555" />
      </>
    ),
  },
  { name: '正交', on: true, art: <path d="M2.500 2v11M3 11.500h6v2" stroke="#668" strokeWidth="1.300" /> },
  { name: '极轴', on: false, art: <path d="M5 13c0-7 8-8 9-2M8 13l7-8M8 12.500h7M11 9l3 4" stroke="#444" /> },
  {
    name: '对象捕捉',
    on: true,
    art: (
      <>
        <path d="M5.500 4.500h12v10h-12z" fill="#d8d8e0" stroke={NAVY} />
        <circle cx="4" cy="4" r="2" fill="#fff" stroke="#e85818" strokeWidth="1.300" />
      </>
    ),
  },
  { name: '对象追踪', on: true, art: <path d="m6 13 8-8M8 7l4 5" stroke="#33446b" /> },
  {
    name: 'DUCS',
    on: true,
    art: (
      <>
        <path d="M3.500 2v11M1.500 4l2-2 2 2M7 13l6-7" stroke={NAVY} />
        <path d="m14 2-4 5h2l-2 4 6-5h-2l3-3z" fill="#ffb020" stroke="#e07800" strokeWidth=".6" />
      </>
    ),
  },
  {
    name: 'DYN',
    on: false,
    art: (
      <>
        <path d="M8.500 4v9M4 8.500h9" stroke="#000" strokeWidth="1.500" />
        <path d="M10.500 10.500h5v4h-5z" fill="#fff" stroke="#000" />
      </>
    ),
  },
  { name: '线宽', on: false, art: <path d="M10 4v8M4 9.500h12" stroke="#000" strokeWidth="2" /> },
  {
    name: '快捷特性',
    on: false,
    art: (
      <>
        <path d="M8.500 5.500h6v9h-6z" fill="#fff" stroke="#000" />
        <path d="M10 8.500h4M10 11.500h4" stroke="#000" strokeDasharray="1 1" />
      </>
    ),
  },
]

function Icon({ name }: { name: string }) {
  return (
    <svg viewBox="0 0 17 16" className="h-4 w-[17px] shrink-0" fill="none" stroke={INK} aria-hidden="true">
      {ICONS[name]}
    </svg>
  )
}

function ToolButton({ name }: { name: string }) {
  return (
    <button type="button" aria-label={name} className="flex h-[22px] w-[23px] shrink-0 items-center justify-center">
      <Icon name={name} />
    </button>
  )
}

function DropArrow({ name, dim }: { name: string; dim: boolean }) {
  return (
    <button type="button" aria-label={name} className="flex h-[22px] w-[13px] shrink-0 items-center justify-center">
      <svg viewBox="0 0 6 3" className="h-[3px] w-1.5" aria-hidden="true">
        <path d="M0 0h6L3 3z" fill={dim ? '#c0c0c4' : '#22226a'} />
      </svg>
    </button>
  )
}

function Grip() {
  return (
    <div className="flex w-2 shrink-0 items-center justify-center bg-[#666]">
      <div className="h-4 w-1 bg-[repeating-conic-gradient(#222_0_25%,#777_0_50%)] bg-[length:2px_2px]" />
    </div>
  )
}

function TopGrip() {
  return (
    <div className="flex h-[9px] shrink-0 items-center justify-center bg-[#666]">
      <div className="h-1 w-3.5 bg-[repeating-conic-gradient(#222_0_25%,#777_0_50%)] bg-[length:2px_2px]" />
    </div>
  )
}

function HToolbar({ children, grow }: { children: ReactNode; grow?: boolean }) {
  return (
    <div className={`flex h-6 border-y border-r border-[#333] ${grow ? 'min-w-0 flex-1' : 'shrink-0'}`}>
      <Grip />
      <div className="flex min-w-0 flex-1 items-center bg-white">{children}</div>
    </div>
  )
}

function VToolbar({ items }: { items: string[] }) {
  return (
    <div className="flex shrink-0 flex-col border-y border-[#333]">
      <TopGrip />
      <div className="flex flex-col items-center bg-white">
        {items.map((item, i) =>
          item === '|' ? (
            <div key={i} className="flex h-1.5 w-[19px] shrink-0 items-center">
              <div className="h-px w-full bg-[#999]" />
            </div>
          ) : (
            <ToolButton key={i} name={item} />
          ),
        )}
      </div>
    </div>
  )
}

function Separator() {
  return (
    <div className="flex h-[22px] w-1.5 shrink-0 justify-center py-px">
      <div className="w-px bg-[#c8c480]" />
    </div>
  )
}

function Chevron() {
  return (
    <svg viewBox="0 0 16 18" className="pointer-events-none h-[18px] w-4 shrink-0" aria-hidden="true">
      <rect width="16" height="18" rx="2" fill="#c8ccf8" />
      <path d="M1 1h5M11 16h4" stroke="#b4ecff" strokeWidth="2" />
      <path d="m4 6.500 4 4 4-4" fill="none" stroke="#4a5078" strokeWidth="2" />
    </svg>
  )
}

function Key({ children }: { children: ReactNode }) {
  return <span className="font-['Liberation_Mono',monospace] text-[10px]">{children}</span>
}

function Mono({ children }: { children: ReactNode }) {
  return <span className="font-['Liberation_Mono',monospace] text-[13px]">{children}</span>
}

function MenuBar() {
  return (
    <nav className="flex h-5 shrink-0 overflow-hidden text-white">
      <button type="button" aria-label="AutoCAD" className="mr-1 w-[33px] shrink-0 border-r border-b border-[#888] bg-[#5c5c5c]">
        <svg viewBox="0 0 32 19" className="h-[19px] w-8" aria-hidden="true">
          <path d="M1 3 3 0h21l5 8-4 5-9-2-9 3-6-3z" fill="#8c1418" />
          <path d="m4 1 6-1 3 5-8 1zM15 0l7 1 5 7-7-1z" fill="#e03030" />
          <path d="m2 8 10-2 6 3-10 3z" fill="#c82024" />
          <path d="m12 1 3 6 7 3" fill="none" stroke="#f88" />
          <path d="m1 12 8 2 8-3 9 3" fill="none" stroke="#2c0808" strokeWidth="2" />
          <path d="M24 12h7l-3.500 4z" fill="#000" />
        </svg>
      </button>
      {MENUS.map(([label, key]) => (
        <button key={key} type="button" className="flex h-4 w-[62px] shrink-0 items-center px-2.5 text-[12px] leading-4 whitespace-nowrap">
          {label}
          <Key>
            (<u>{key}</u>)
          </Key>
        </button>
      ))}
    </nav>
  )
}

function Toolbars() {
  return (
    <div className="flex shrink-0 flex-col gap-[3px] pt-0.5 pb-[3px]">
      <div className="flex gap-px">
        <HToolbar>
          {STANDARD.map((item, i) => {
            if (item === '|') return <Separator key={i} />
            if (item.endsWith('>')) return <DropArrow key={i} name={item} dim={item === 'redo>'} />
            return <ToolButton key={i} name={item} />
          })}
        </HToolbar>
        <HToolbar grow>
          <ToolButton name="textStyle" />
          <div className="h-[22px] flex-1 border-l border-[#4a88c8]" />
        </HToolbar>
      </div>

      <div className="flex gap-px">
        <HToolbar>
          <ToolButton name="layerProps" />
          <label className="flex h-[22px] w-[299px] items-center border border-[#4a88c8] pr-px pl-0.5">
            <Icon name="bulb" />
            <Icon name="sun" />
            <Icon name="freeze" />
            <Icon name="lock" />
            <span className="mr-1 size-[11px] shrink-0 border border-black" />
            <select aria-label="图层" className="min-w-0 flex-1 appearance-none bg-transparent font-['Liberation_Sans',sans-serif] text-[11px] text-black">
              <option>0</option>
            </select>
            <Chevron />
          </label>
          <ToolButton name="layerCurrent" />
          <ToolButton name="layerPrev" />
          <ToolButton name="layerState" />
        </HToolbar>
        <HToolbar grow>
          <label className="flex h-[22px] w-[150px] shrink-0 items-center border border-[#4a88c8] pr-px pl-[5px]">
            <span className="mr-[3px] size-[11px] shrink-0 border border-black" />
            <select aria-label="颜色" className="min-w-0 flex-1 appearance-none bg-transparent font-['Liberation_Serif',serif] text-[12px] text-black">
              <option>ByLayer</option>
            </select>
            <Chevron />
          </label>
          <Separator />
          <label className="flex h-[22px] min-w-0 flex-1 items-center gap-1 border border-r-0 border-[#4a88c8] pl-1">
            <span className="h-px min-w-0 flex-1 bg-black" />
            <select aria-label="线型" className="w-11 shrink-0 appearance-none bg-transparent font-['Liberation_Serif',serif] text-[12px] text-black">
              <option>ByLayer</option>
            </select>
          </label>
        </HToolbar>
      </div>

      <div className="flex gap-px">
        <HToolbar>
          {YANXIU.map((name) => (
            <ToolButton key={name} name={name} />
          ))}
        </HToolbar>
        <HToolbar>
          {YANXIU_DIM.map((name) => (
            <ToolButton key={name} name={name} />
          ))}
        </HToolbar>
      </div>
    </div>
  )
}

function TabSlash() {
  return (
    <svg viewBox="0 0 10 15" className="h-[15px] w-2.5 shrink-0" aria-hidden="true">
      <path d="M9 0 3 13.500H0" fill="none" stroke="#555" strokeWidth="1.500" />
    </svg>
  )
}

const NAV = [
  ['第一个', 'M3.500 3v8M10 3v8L5 7z'],
  ['上一个', 'M9 3v8L4 7z'],
  ['下一个', 'M5 3v8l5-4z'],
  ['最后一个', 'M10.500 3v8M4 3v8l5-4z'],
]

function LayoutTabs() {
  return (
    <div className="flex h-[17px] shrink-0 overflow-hidden border-t border-b border-t-[#888] border-b-white bg-[#ffffcc] text-black">
      {NAV.map(([label, d]) => (
        <button key={label} type="button" aria-label={label} className="w-3.5 shrink-0 border-r border-[#999]">
          <svg viewBox="0 0 14 15" className="h-[15px] w-[13px]" fill="#999" stroke="#999" aria-hidden="true">
            <path d={d} />
          </svg>
        </button>
      ))}
      <button
        type="button"
        className="flex w-12 shrink-0 items-center justify-center bg-black text-[12px] font-bold leading-[14px] text-white [clip-path:polygon(0_0,100%_0,88%_100%,12%_100%)]"
      >
        模型
      </button>
      {['布局1', '布局2'].map((tab) => (
        <div key={tab} className="flex">
          <button type="button" className="w-9 shrink-0 pl-0.5 text-[12px] leading-[14px] whitespace-nowrap">
            {tab}
          </button>
          <TabSlash />
        </div>
      ))}
      <div className="ml-auto flex">
        <div className="w-1.5 rounded-sm border border-[#b8b8d0] bg-white" />
        <button type="button" aria-label="向左滚动" className="flex w-3 items-center justify-center bg-[#c8ccf8]">
          <svg viewBox="0 0 8 8" className="size-2" aria-hidden="true">
            <path d="M6 0 2 4l4 4" fill="none" stroke="#4a5078" strokeWidth="2" />
          </svg>
        </button>
      </div>
    </div>
  )
}

function Canvas() {
  return (
    <div className="flex min-w-0 flex-1 flex-col border-t-2 border-l-2 border-[#858585]">
      <div className="relative flex-1 bg-black">
        {/* UCS icon */}
        <svg viewBox="0 0 90 100" className="absolute bottom-[3px] left-2 h-[100px] w-[90px]" fill="none" stroke="#fff" aria-hidden="true">
          <path d="M1.500 82.500h9v9h-9zM5.500 82V42M11 87.500h41" />
          <path d="M5.500 29.500 1 41.500h10zM64.500 87.500 52.500 83v9z" />
          <path d="M5.500 32v9M62 87.500h-9" stroke="#999" strokeWidth="2" />
          <path d="m3 8 4.500 6L12 8M7.500 14v6M74 82l9 12M83 82l-9 12" stroke="#ddd" />
        </svg>
      </div>
      <LayoutTabs />
    </div>
  )
}

function WorkArea() {
  return (
    <div className="relative flex min-h-0 flex-1">
      <div className="w-[23px] shrink-0">
        <VToolbar items={DRAW} />
        <div className="-mt-px">
          <VToolbar items={TEXT_TOOLS} />
        </div>
      </div>
      <div className="ml-1 flex shrink-0 flex-col items-stretch border-x border-[#333]">
        <VToolbar items={DIMENSION} />
        <div className="flex-1 bg-[#666]" />
      </div>
      <div className="w-1 shrink-0" />
      <Canvas />

      {/* Mouse pointer over the circle tool */}
      <svg viewBox="0 0 13 21" className="pointer-events-none absolute top-[151px] left-2.5 h-[21px] w-[13px]" aria-hidden="true">
        <path d="M1 1v16l3.500-3.500 2.500 6 3-1.200L7.500 12.500H12z" fill="#fff" stroke="#000" />
      </svg>
    </div>
  )
}

function CommandLine() {
  return (
    <div className="flex shrink-0 border-t-4 border-[#666] bg-[#999] font-['Liberation_Mono','Noto_Sans_CJK_SC',monospace] text-[16px] leading-4 text-black">
      <div className="w-4 shrink-0 pt-[3px]">
        <div className="h-[3px] w-3.5 bg-[repeating-conic-gradient(#222_0_25%,#999_0_50%)] bg-[length:2px_2px]" />
      </div>
      <div className="min-w-0 flex-1 rounded-l-[3px] bg-white">
        <div className="h-[38px] pt-px whitespace-pre">
          <p className="flex h-4 items-baseline">
            命令<Mono>: </Mono>指定对角点<Mono>:</Mono>
          </p>
          <p className="flex h-4 items-baseline">
            命令<Mono>: _.erase </Mono>找到<Mono> 4 </Mono>个
          </p>
        </div>
        <label className="flex h-5 items-center border-t border-[#999]">
          <span className="flex h-4 shrink-0 items-baseline">
            命令<Mono>:</Mono>
          </span>
          <input type="text" aria-label="命令" className="min-w-0 flex-1 bg-transparent outline-none" />
        </label>
      </div>
    </div>
  )
}

function StatusBar() {
  return (
    <div className="flex h-3.5 shrink-0 items-start overflow-hidden border-t border-[#222] bg-[#999] text-black">
      <p className="flex w-[282px] shrink-0 items-baseline pt-1 pl-1.5 font-['Liberation_Mono','Noto_Sans_CJK_SC',monospace] text-[12px] leading-4 whitespace-pre">
        燕秀字高<Key>=2.5, 4468.98, -22548.71, 0.00</Key>
      </p>
      {STATUS.map(({ name, on, art }) => (
        <button
          key={name}
          type="button"
          aria-label={name}
          aria-pressed={on}
          className={`h-4 w-[22px] shrink-0 border-l border-[#555] ${
            on
              ? 'bg-[linear-gradient(#c4ffff_0_5px,#c8ccf4_5px_8px,#b0dcdc_8px_10px,#c8ccf4_10px)]'
              : 'bg-[#c8c8c8]'
          }`}
        >
          <svg viewBox="0 0 21 16" className="h-4 w-[21px]" fill="none" aria-hidden="true">
            {art}
          </svg>
        </button>
      ))}
      <div className="ml-auto flex h-4 border-l border-[#555] bg-[#c8c8c8]">
        <button type="button" aria-label="模型" className="w-[22px]">
          <svg viewBox="0 0 22 16" className="h-4 w-[22px]" aria-hidden="true">
            <path d="M5.500 3.500h10v12h-10z" fill="#fff" stroke="#222" />
            <path d="m7 5 5 8H7z" fill="#222" />
          </svg>
        </button>
        <button type="button" aria-label="快速查看布局" className="w-[17px] border-l border-[#555]">
          <svg viewBox="0 0 16 16" className="h-4 w-4" aria-hidden="true">
            <path d="M2.500 3.500h7v7h-7zM10.500 3.500h7v7h-7z" fill="#fff" stroke="#222" strokeWidth="1.500" />
          </svg>
        </button>
      </div>
    </div>
  )
}

export default function App() {
  return (
    <main className="flex h-screen flex-col overflow-hidden border border-black bg-[#666] font-['Noto_Sans_CJK_SC',sans-serif]">
      <MenuBar />
      <Toolbars />
      <WorkArea />
      <CommandLine />
      <StatusBar />
    </main>
  )
}
